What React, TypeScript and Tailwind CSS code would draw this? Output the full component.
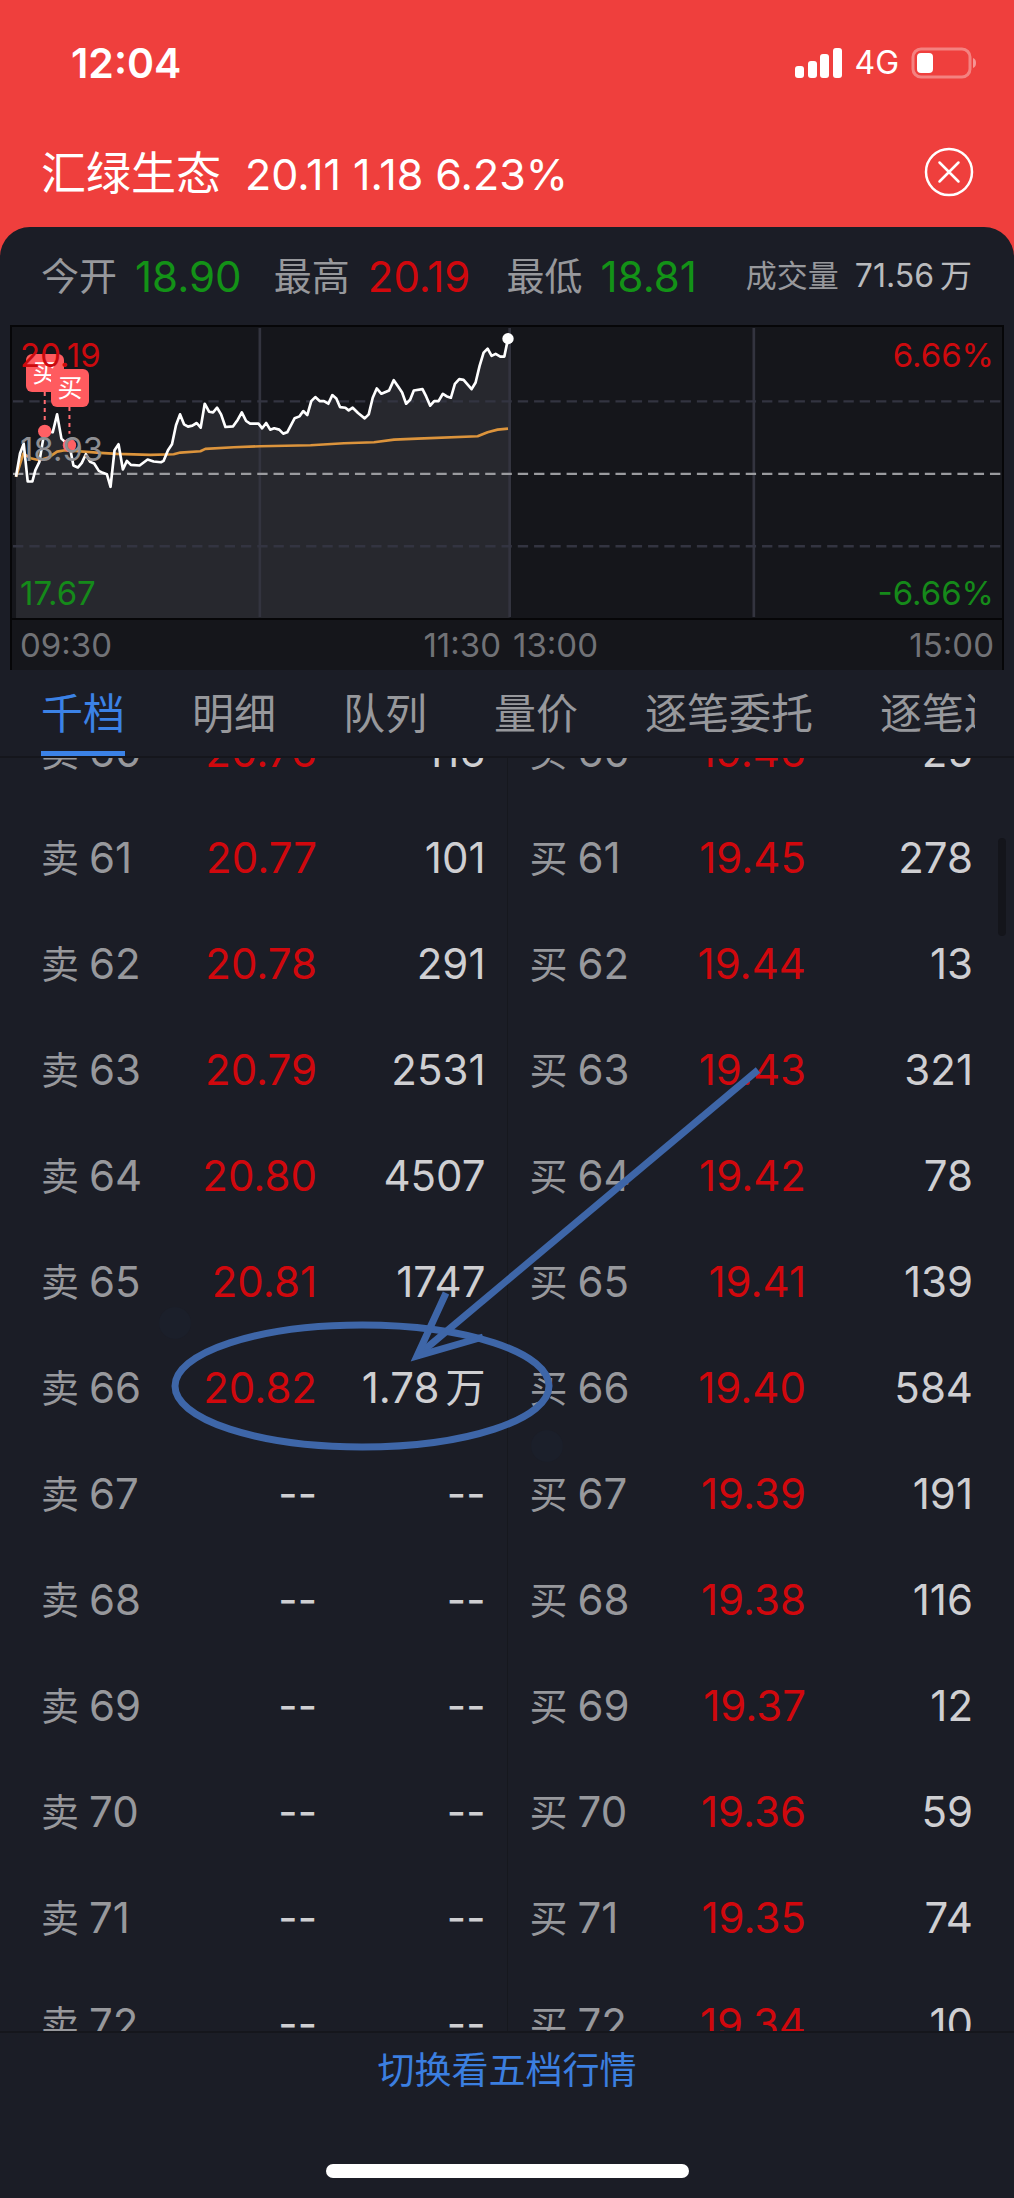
type Order = [price: string, volume: string];

interface Level {
  no: number;
  sell: Order;
  buy: Order;
}

const levels: Level[] = [
  { no: 60, sell: ['20.76', '116'], buy: ['19.46', '25'] },
  { no: 61, sell: ['20.77', '101'], buy: ['19.45', '278'] },
  { no: 62, sell: ['20.78', '291'], buy: ['19.44', '13'] },
  { no: 63, sell: ['20.79', '2531'], buy: ['19.43', '321'] },
  { no: 64, sell: ['20.80', '4507'], buy: ['19.42', '78'] },
  { no: 65, sell: ['20.81', '1747'], buy: ['19.41', '139'] },
  { no: 66, sell: ['20.82', '1.78万'], buy: ['19.40', '584'] },
  { no: 67, sell: ['--', '--'], buy: ['19.39', '191'] },
  { no: 68, sell: ['--', '--'], buy: ['19.38', '116'] },
  { no: 69, sell: ['--', '--'], buy: ['19.37', '12'] },
  { no: 70, sell: ['--', '--'], buy: ['19.36', '59'] },
  { no: 71, sell: ['--', '--'], buy: ['19.35', '74'] },
  { no: 72, sell: ['--', '--'], buy: ['19.34', '10'] },
];

const tabs = ['千档', '明细', '队列', '量价', '逐笔委托', '逐笔还原'];

const pricePoints =
  '48,500 60,430 71,400 83,514 97,514 106,480 118,455 127,400 134,362 158,366 171,312 184,385 200,400 210,415 220,466 233,472 245,458 257,432 270,455 282,460 296,482 308,488 320,492 331,530 343,420 355,402 368,478 380,452 392,464 418,466 442,448 460,454 482,456 490,452 503,420 515,402 527,345 539,312 551,342 563,349 576,346 589,338 601,352 613,280 626,304 638,306 650,292 662,312 675,350 698,348 712,328 724,306 737,332 749,340 774,340 785,354 797,338 809,358 821,354 836,358 848,370 860,366 882,324 897,318 908,302 920,314 932,272 944,260 957,272 970,272 983,280 995,254 1007,264 1018,290 1034,292 1044,300 1056,292 1072,308 1092,324 1104,312 1116,262 1128,234 1142,250 1165,240 1179,209 1192,228 1204,246 1216,280 1228,268 1239,240 1265,236 1276,258 1288,286 1300,272 1313,272 1326,250 1338,258 1350,262 1362,220 1375,206 1388,208 1412,236 1424,216 1436,166 1448,126 1460,114 1472,136 1484,130 1498,138 1510,138 1521,84';

const averagePoints =
  '48,500 70,430 92,444 118,450 145,442 171,424 195,420 300,428 350,431 450,434 520,432 540,427 600,423 615,416 700,411 780,408 930,405 1030,399 1120,396 1180,388 1250,385 1430,378 1460,366 1490,358 1521,355';

function StatusBar() {
  return (
    <div className="flex h-[126px] shrink-0 items-center justify-between pl-[71px] pr-9 text-white">
      <span className="text-[41px] font-semibold leading-none">12:04</span>
      <div className="flex items-center gap-3">
        <svg className="h-[30px] w-[47px]" viewBox="0 0 47 30" fill="currentColor">
          <rect x="0" y="18" width="9" height="12" rx="3" />
          <rect x="13" y="13" width="9" height="17" rx="3" />
          <rect x="25" y="6" width="9" height="24" rx="3" />
          <rect x="38" y="0" width="9" height="30" rx="3" />
        </svg>
        <span className="text-[32px] leading-none">4G</span>
        <svg className="h-8 w-[67px]" viewBox="0 0 67 32">
          <rect x="2" y="2" width="57" height="28" rx="8" fill="none" stroke="#fff" strokeOpacity="0.35" strokeWidth="3" />
          <rect x="6" y="6" width="16" height="20" rx="4" fill="#fff" />
          <path d="M62 11c4 1 4 9 0 10z" fill="#fff" fillOpacity="0.45" />
        </svg>
      </div>
    </div>
  );
}

function Stat({ label, value, color }: { label: string; value: string; color: string }) {
  return (
    <div className="flex items-center gap-[18px]">
      <dt className="text-[38px] text-[#97989c]">{label}</dt>
      <dd className={color}>{value}</dd>
    </div>
  );
}

function Chart() {
  return (
    <section className="mx-[10px] shrink-0 border-x-2 border-t-2 border-black/70 bg-[#15161b] text-[33px] leading-[50px]">
      <div className="relative">
        <svg className="block h-[291px] w-full" viewBox="36 49 2964 876" preserveAspectRatio="none" fill="none">
          <polygon points={`48,925 ${pricePoints} 1526,84 1526,925`} fill="#27282e" />
          <path d="M778 52V922M1526 52V922M2257 52V922" stroke="#33343f" strokeWidth="8" />
          <path d="M39 273H3000M39 709H3000" stroke="#333441" strokeWidth="7" strokeDasharray="31 17.75" />
          <path d="M39 491H3000" stroke="#9a9b9f" strokeWidth="7" strokeDasharray="31 17.75" />
          <polyline points={averagePoints} stroke="#dc943c" strokeWidth="8" strokeLinejoin="round" />
          <polyline points={pricePoints} stroke="#fff" strokeWidth="8" strokeLinejoin="round" />
          <circle cx="1521" cy="84" r="17" fill="#fff" />
          <path d="M134 245V330M208 290V370" stroke="#ff6b70" strokeWidth="6" strokeDasharray="12 12" />
          <circle cx="134" cy="363" r="20" fill="#ff6064" />
          <circle cx="208" cy="405" r="20" fill="#ff6064" />
        </svg>
        <span className="absolute left-[14px] top-[27px] flex size-[38px] items-center justify-center rounded-md bg-[#ff5b5f] text-[25px] text-white">买</span>
        <span className="absolute left-[39px] top-[42px] flex size-[38px] items-center justify-center rounded-md bg-[#ff5b5f] text-[25px] text-white">买</span>
        <span className="absolute left-2 top-[3px] text-[#cc0a0e]">20.19</span>
        <span className="absolute left-2 top-[97px] text-[#8e8f93]">18.93</span>
        <span className="absolute bottom-0 left-2 text-[#158a1a]">17.67</span>
        <span className="absolute right-2 top-[3px] text-[#cc0a0e]">6.66%</span>
        <span className="absolute bottom-0 right-2 text-[#158a1a]">-6.66%</span>
      </div>
      <div className="grid grid-cols-2 border-t-2 border-black/70 px-2 text-[#717276]">
        <div className="flex justify-between pr-[6px]">
          <time>09:30</time>
          <time>11:30</time>
        </div>
        <div className="flex justify-between pl-[6px]">
          <time>13:00</time>
          <time>15:00</time>
        </div>
      </div>
    </section>
  );
}

function Volume({ value }: { value: string }) {
  const inWan = value.endsWith('万');
  return (
    <span className="inline-flex items-center gap-[6px]">
      {inWan ? value.slice(0, -1) : value}
      {inWan && <span className="text-[40px]">万</span>}
    </span>
  );
}

function LevelLabel({ side, no }: { side: string; no: number }) {
  return (
    <span className="flex items-center gap-[10px] text-[#97989c]">
      <span className="text-[38px]">{side}</span>
      {no}
    </span>
  );
}

function OrderBook() {
  return (
    <div className="relative min-h-0 flex-1 overflow-hidden">
      <div className="relative -mt-[59px]">
        <div className="px-[41px]">
          <table className="w-full table-fixed text-[42px] leading-none text-[#cfcfd2]">
            <colgroup>
              <col className="w-[130px]" />
              <col className="w-[146px]" />
              <col className="w-[190px]" />
              <col className="w-[140px]" />
              <col className="w-[159px]" />
              <col className="w-[167px]" />
            </colgroup>
            <tbody>
              {levels.map(({ no, sell, buy }) => (
                <tr key={no} className="h-[106px] text-right">
                  <th scope="row" className="font-normal">
                    <LevelLabel side="卖" no={no} />
                  </th>
                  <td className={sell[0] === '--' ? '' : 'text-[#d0080d]'}>{sell[0]}</td>
                  <td className="border-r border-[#16181e] pr-[21px]">
                    <Volume value={sell[1]} />
                  </td>
                  <th scope="row" className="pl-[22px] font-normal">
                    <LevelLabel side="买" no={no} />
                  </th>
                  <td className="text-[#d0080d]">{buy[0]}</td>
                  <td>
                    <Volume value={buy[1]} />
                  </td>
                </tr>
              ))}
            </tbody>
          </table>
        </div>

        {/* hand-drawn mark over level 66 */}
        <svg className="pointer-events-none absolute inset-0 h-full w-full" viewBox="0 0 1014 1378" fill="none">
          <circle cx="175" cy="624" r="16" fill="#1b1f2a" />
          <circle cx="547" cy="747" r="16" fill="#1b1f2a" />
          <g stroke="#3e66a8" strokeWidth="7">
            <ellipse cx="362" cy="687" rx="187" ry="61" />
            <path d="M758 371L417 657" />
            <path d="M446 594L417 657L483 638" />
          </g>
        </svg>
      </div>
      <div className="absolute right-2 top-[80px] h-[98px] w-2 rounded-full bg-[#14151b]" />
    </div>
  );
}

export default function App() {
  return (
    <div className="flex h-screen flex-col bg-[#ef3f3d] font-['Inter','Noto_Sans_CJK_SC',sans-serif]">
      <StatusBar />
      <header className="flex h-[101px] shrink-0 items-start justify-between pl-[41px] pr-10 text-white">
        <h1 className="flex items-center gap-6 text-[43px] leading-[96px]">
          <span className="text-[45px] leading-[96px]">汇绿生态</span>
          <span>20.11 1.18 6.23%</span>
        </h1>
        <button type="button" aria-label="关闭" className="mt-[21px]">
          <svg className="size-[50px]" viewBox="0 0 50 50" fill="none" stroke="currentColor" strokeLinecap="round">
            <circle cx="25" cy="25" r="23" strokeWidth="2.5" />
            <path d="M15.5 15.5l19 19M34.5 15.5l-19 19" strokeWidth="2.5" />
          </svg>
        </button>
      </header>

      <main className="flex min-h-0 flex-1 flex-col rounded-t-[30px] bg-[#1b1d26]">
        <dl className="grid h-[98px] shrink-0 grid-cols-4 items-center whitespace-nowrap pl-[41px] pr-[42px] text-[42px]">
          <Stat label="今开" value="18.90" color="text-[#139217]" />
          <Stat label="最高" value="20.19" color="text-[#d0080d]" />
          <Stat label="最低" value="18.81" color="text-[#139217]" />
          <div className="flex items-center justify-end gap-4">
            <dt className="text-[31px] text-[#97989c]">成交量</dt>
            <dd className="flex gap-[6px] text-[32px] text-[#b9babd]">71.56<span>万</span></dd>
          </div>
        </dl>

        <Chart />

        <nav className="h-[88px] shrink-0 border-b-2 border-[#15161c] pl-[41px] pr-[39px]">
          <div className="flex h-[86px] gap-[67px] overflow-hidden text-[42px]">
            {tabs.map((tab, i) => (
              <button
                key={tab}
                type="button"
                className={
                  i === 0
                    ? 'shrink-0 border-b-[5px] border-[#3b82e6] pt-[6px] text-[#3b82e6]'
                    : 'shrink-0 border-b-[5px] border-transparent pt-[6px] text-[#97989c]'
                }
              >
                {tab}
              </button>
            ))}
          </div>
        </nav>

        <OrderBook />

        <footer className="flex h-[167px] shrink-0 flex-col items-center justify-between border-t-2 border-[#15161c] pb-5 pt-2">
          <button type="button" className="text-[37px] leading-[60px] text-[#3b7fe0]">
            切换看五档行情
          </button>
          <div className="h-[14px] w-[363px] rounded-full bg-white" />
        </footer>
      </main>
    </div>
  );
}
